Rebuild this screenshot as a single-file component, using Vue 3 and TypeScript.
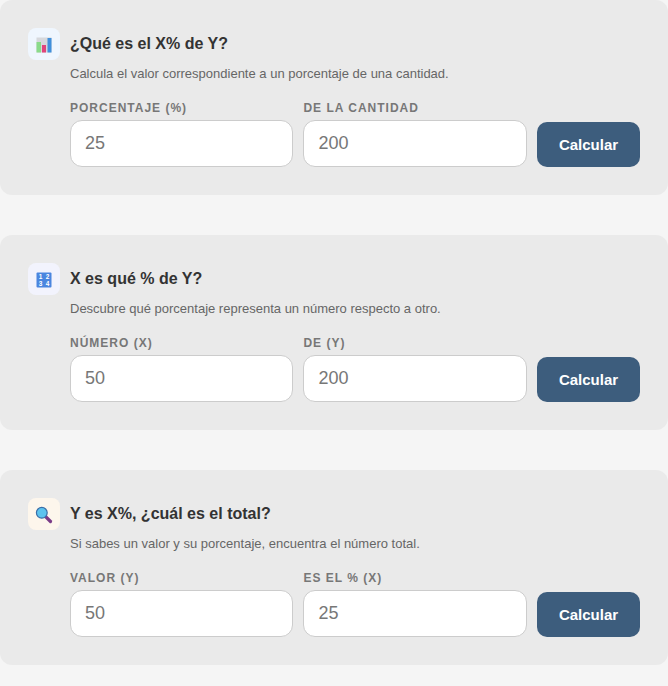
<script setup lang="ts">
interface Field { label: string; value: string }
interface Card { icon: string; tone: string; title: string; desc: string; fields: Field[] }
const cards: Card[] = [
  { icon: 'chart', tone: 'blue', title: '¿Qué es el X% de Y?', desc: 'Calcula el valor correspondiente a un porcentaje de una cantidad.', fields: [{ label: 'Porcentaje (%)', value: '25' }, { label: 'De la cantidad', value: '200' }] },
  { icon: 'nums', tone: 'violet', title: 'X es qué % de Y?', desc: 'Descubre qué porcentaje representa un número respecto a otro.', fields: [{ label: 'Número (X)', value: '50' }, { label: 'De (Y)', value: '200' }] },
  { icon: 'lens', tone: 'cream', title: 'Y es X%, ¿cuál es el total?', desc: 'Si sabes un valor y su porcentaje, encuentra el número total.', fields: [{ label: 'Valor (Y)', value: '50' }, { label: 'Es el % (X)', value: '25' }] },
]
</script>

<template>
  <main class="page">
    <section v-for="c in cards" :key="c.title" class="card">
      <header class="head">
        <span class="icon" :class="c.tone">
          <svg v-if="c.icon === 'chart'" width="16" height="16" viewBox="0 0 16 16">
            <rect x="0.5" y="0.5" width="15" height="15" fill="#d6d8dc" />
            <rect x="0.5" y="5" width="4.5" height="10.5" fill="#8adb8a" />
            <rect x="6" y="8" width="4" height="7.5" fill="#e0457b" />
            <rect x="11.5" y="1" width="4" height="14.5" fill="#4090dc" />
          </svg>
          <svg v-else-if="c.icon === 'nums'" width="16" height="16" viewBox="0 0 16 16">
            <rect x="0.5" y="0.5" width="15" height="15" rx="1" fill="#4a86df" />
            <text x="4.5" y="7" class="n">1</text>
            <text x="11.5" y="7" class="n">2</text>
            <text x="4.5" y="14" class="n">3</text>
            <text x="11.5" y="14" class="n">4</text>
          </svg>
          <svg v-else width="18" height="18" viewBox="0 0 18 18">
            <path d="M10.5 10.5 L15.5 15.5" stroke="#7a3b87" stroke-width="3.2" stroke-linecap="round" />
            <circle cx="6.8" cy="6.8" r="5.4" fill="#5cc3ee" stroke="#3a6ea8" stroke-width="1.2" />
          </svg>
        </span>
        <h2 class="title">{{ c.title }}</h2>
      </header>
      <p class="desc">{{ c.desc }}</p>
      <form class="row" @submit.prevent>
        <label v-for="f in c.fields" :key="f.label" class="field">
          <span class="label">{{ f.label }}</span>
          <input class="input" type="text" :value="f.value" />
        </label>
        <button class="btn" type="submit">Calcular</button>
      </form>
    </section>
  </main>
</template>

<style scoped>
.page { display: flex; flex-direction: column; gap: 40px; padding-bottom: 21px; font-family: "Liberation Sans", Arial, sans-serif; }
.card { background: #eaeaea; border-radius: 12px; padding: 28px; height: 195px; box-sizing: border-box; }
.head { display: flex; align-items: center; gap: 10px; height: 32px; }
.icon { width: 32px; height: 32px; border-radius: 8px; display: flex; align-items: center; justify-content: center; flex: none; }
.icon svg { transform: translateY(1px); }
.blue { background: #eff6fe; }
.violet { background: #f2f3fd; }
.cream { background: #fdf6ec; }
.n { fill: #fff; font-size: 6.5px; font-weight: 700; text-anchor: middle; font-family: "Liberation Sans", sans-serif; }
.title { margin: 0; font-size: 16px; font-weight: 700; color: #333; line-height: 32px; }
.desc { margin: 6px 0 0 42px; font-size: 13px; line-height: 16px; color: #666; }
.row { display: flex; align-items: flex-end; gap: 10px; margin: 20px 0 0 42px; }
.field { display: flex; flex-direction: column; gap: 5px; flex: 0 0 223.6px; min-width: 0; }
.field:first-child { flex-basis: 223.4px; }
.label { font-size: 12px; line-height: 13px; font-weight: 700; letter-spacing: 1px; text-transform: uppercase; color: #777; }
.input { width: 100%; box-sizing: border-box; height: 47px; padding: 0 14px; background: #fff; border: 1px solid #ccc; border-radius: 12px; font: 18px "Liberation Sans", Arial, sans-serif; color: #777; outline: none; }
.btn { flex: none; width: 103px; height: 45px; border: 0; border-radius: 10px; background: #3d5d7d; color: #fff; font: 700 15px "Liberation Sans", Arial, sans-serif; }
</style>

<style>
html, body { background: #f5f5f5; margin: 0; }
</style>
